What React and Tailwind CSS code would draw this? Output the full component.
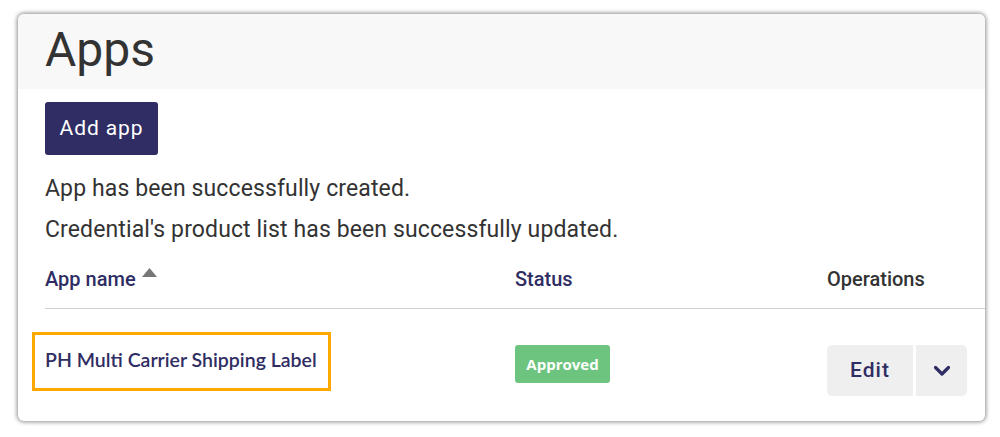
import React from "react";

const navy = "text-[#2f2d63]";

const SortUp = () => (
  <svg className="w-[15px] h-[9px] ml-[6px] mt-[1px] self-start" viewBox="0 0 15 9">
    <path d="M7.5 0L15 9H0z" fill="#777" />
  </svg>
);

const ChevronDown = () => (
  <svg className="w-[18px] h-[12px]" viewBox="0 0 18 12" fill="none">
    <path d="M2.5 2.5L9 9l6.5-6.5" stroke="#2f2d63" strokeWidth="3.2" strokeLinecap="round" strokeLinejoin="round" />
  </svg>
);

const App = () => {
  const messages = [
    "App has been successfully created.",
    "Credential's product list has been successfully updated.",
  ];

  return (
    <div className="bg-white w-[1000px] h-[437px] pt-[14px] pl-[18px] font-['Roboto',sans-serif]">
      <div className="w-[967px] h-[407px] bg-white rounded-[6px] overflow-hidden shadow-[0_0_4px_1px_rgba(0,0,0,0.45)]">
        <div className="h-[75px] bg-[#f8f8f8] pl-[27px] pt-[12px]">
          <h1 className="text-[48px] leading-none text-[#333]">Apps</h1>
        </div>

        <div className="pl-[27px] pt-[13px]">
          <button className="h-[53px] w-[113px] bg-[#2f2d63] rounded-[3px] text-white text-[21px] tracking-[0.9px]">
            Add app
          </button>

          <div className="mt-[20px] flex flex-col gap-[13px]">
            {messages.map((m, i) => (
              <p key={i} className="text-[23px] leading-[28px] tracking-[0.12px] text-[#333]">{m}</p>
            ))}
          </div>

          <div className="mt-[23px] grid grid-cols-[470px_312px_1fr] border-b border-[#cfcfcf] pb-[17px]">
            <div className={`flex items-center text-[20px] leading-[24px] font-medium ${navy}`}>
              App name
              <SortUp />
            </div>
            <div className={`text-[20px] leading-[24px] font-medium ${navy}`}>Status</div>
            <div className="text-[20px] leading-[24px] font-medium text-[#333]">Operations</div>
          </div>

          <div className="grid grid-cols-[470px_312px_1fr] pt-[36px]">
            <div className="relative">
              <span className={`block mt-[3px] font-['Lato',sans-serif] font-semibold text-[19.5px] leading-[24px] ${navy}`}>
                PH Multi Carrier Shipping Label
              </span>
              <span className="absolute left-[-13px] top-[-13px] w-[299px] h-[59px] border-[3px] border-[#ffa800]" />
            </div>
            <div>
              <span className="inline-flex items-center justify-center w-[95px] h-[38px] bg-[#6cc47e] rounded-[3px] text-white text-[15px] font-bold font-['Open_Sans',sans-serif]">
                Approved
              </span>
            </div>
            <div className="flex gap-[3px]">
              <button className={`w-[86px] h-[51px] bg-[#efefef] rounded-l-[5px] text-[21px] font-medium tracking-[1px] ${navy}`}>
                Edit
              </button>
              <button className="w-[51px] h-[51px] bg-[#efefef] rounded-r-[5px] flex items-center justify-center">
                <ChevronDown />
              </button>
            </div>
          </div>
        </div>
      </div>
    </div>
  );
};

export default App;
